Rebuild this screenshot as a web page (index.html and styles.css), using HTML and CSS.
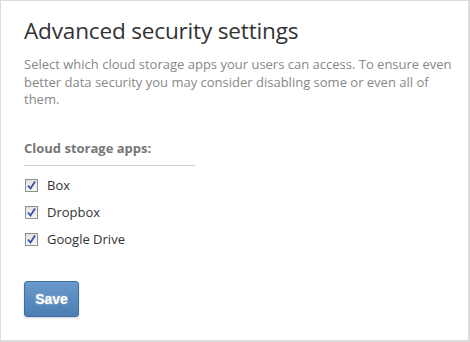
FILE: index.html
```html
<!DOCTYPE html>
<html lang="en">
<head>
  <meta charset="UTF-8" />
  <title>Advanced security settings</title>
  <link rel="stylesheet" href="styles.css">
</head>
<body>
  <div class="settings-panel">
    <h1 class="settings-title">Advanced security settings</h1>
    <p class="settings-desc">Select which cloud storage apps your users can access. To ensure even better data security you may consider disabling some or even all of them.</p>

    <div class="apps-group">
      <h2 class="apps-title">Cloud storage apps:</h2>
      <ul class="apps-list">
        <li class="app-item">
          <span class="check-box">
            <svg width="9" height="9" viewBox="0 0 9 9"><path d="M1 4.5 L3.5 7.5 L8 0.5" fill="none" stroke="#3b4fa8" stroke-width="1.8"/></svg>
          </span>
          <span class="app-name">Box</span>
        </li>
        <li class="app-item">
          <span class="check-box">
            <svg width="9" height="9" viewBox="0 0 9 9"><path d="M1 4.5 L3.5 7.5 L8 0.5" fill="none" stroke="#3b4fa8" stroke-width="1.8"/></svg>
          </span>
          <span class="app-name">Dropbox</span>
        </li>
        <li class="app-item">
          <span class="check-box">
            <svg width="9" height="9" viewBox="0 0 9 9"><path d="M1 4.5 L3.5 7.5 L8 0.5" fill="none" stroke="#3b4fa8" stroke-width="1.8"/></svg>
          </span>
          <span class="app-name">Google Drive</span>
        </li>
      </ul>
    </div>

    <button class="save-btn">Save</button>
  </div>
</body>
</html>
```

FILE: styles.css
```css
* {
  margin: 0;
  padding: 0;
  box-sizing: border-box;
}

body {
  font-family: 'Open Sans', 'Noto Sans', sans-serif;
  background: #fff;
}

.settings-panel {
  width: 470px;
  height: 342px;
  border: 1px solid #dcdcdc;
  border-right-width: 2px;
  border-bottom-width: 2px;
  padding: 15px 10px 0 23px;
}

.settings-title {
  font-size: 22.6px;
  font-weight: 400;
  color: #333;
  line-height: 30px;
  letter-spacing: -0.2px;
}

.settings-desc {
  max-width: 430px;
  margin-top: 10px;
  font-size: 13px;
  line-height: 17.5px;
  color: #888;
}

.apps-group {
  margin-top: 30px;
  width: 171px;
}

.apps-title {
  font-size: 13px;
  font-weight: 700;
  color: #777;
  line-height: 18px;
  padding-bottom: 8px;
  border-bottom: 1px solid #cfcfcf;
}

.apps-list {
  list-style: none;
  margin-top: 6px;
}

.app-item {
  display: flex;
  align-items: center;
  height: 27px;
  font-size: 13px;
  color: #333;
}

.check-box {
  width: 13px;
  height: 13px;
  border: 1px solid #8e8f8f;
  background: linear-gradient(#e2e2e2, #f6f6f6);
  display: flex;
  align-items: center;
  justify-content: center;
  margin-right: 9px;
  margin-left: 1px;
}

.save-btn {
  display: block;
  margin-top: 28px;
  width: 55px;
  height: 36px;
  border: 1px solid #3f6f9f;
  border-radius: 3px;
  background: linear-gradient(#6b9acb, #4a7eb4);
  box-shadow: 0 1px 2px rgba(0, 0, 0, 0.2);
  color: #fff;
  font-family: 'Liberation Sans', Arial, sans-serif;
  font-size: 14px;
  font-weight: 700;
  text-shadow: 0 0 2px rgba(255, 255, 255, 0.6);
  cursor: pointer;
}
```
